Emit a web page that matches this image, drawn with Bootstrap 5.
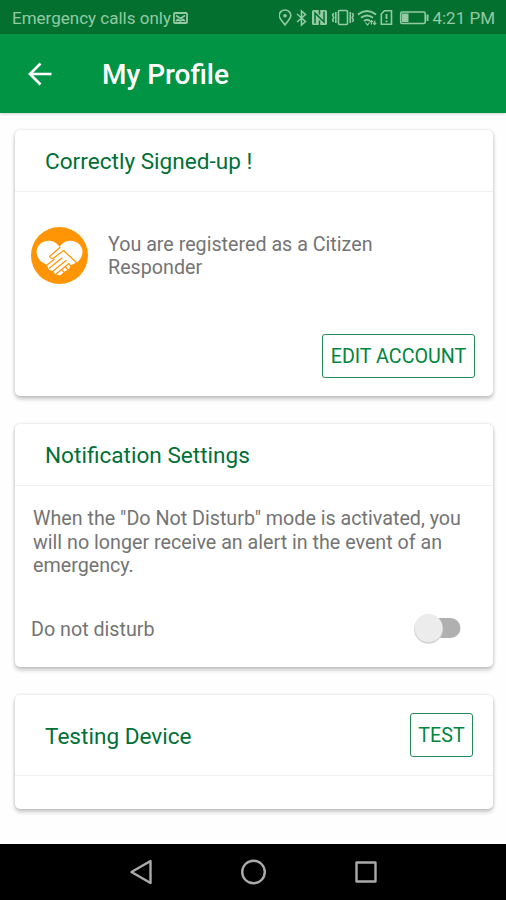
<!DOCTYPE html>
<html lang="en">
<head>
<meta charset="utf-8">
<meta name="viewport" content="width=device-width, initial-scale=1">
<title>My Profile</title>
<link href="https://cdn.jsdelivr.net/npm/bootstrap@5.3.0/dist/css/bootstrap.min.css" rel="stylesheet">
<style>
body{font-family:Roboto,"Liberation Sans",sans-serif;height:900px;background:#fefefe;color:#747474;overflow:hidden}
svg{display:block;flex:none}
.status-strip{height:34px;background:#04702f;color:#93caa4;font-size:17px;line-height:32px;padding:2px 11px 0 12px}
.status-label{width:157px;white-space:nowrap}
.status-time{width:63px;white-space:nowrap}
.app-bar{height:79px;background:#009444;padding:0 28px;box-shadow:0 1px 3px rgba(0,0,0,.2)}
.app-title{font-size:28px;font-weight:500;line-height:34px;color:#fff;margin:2px 0 0 50px}
.content{padding:17px 13px 0 15px}
.panel{border:0;border-radius:5px;background:#fff;box-shadow:0 3px 4px rgba(0,0,0,.22),0 0 3px rgba(0,0,0,.14)}
.panel-lg{height:266px}
.panel-md{height:243px;margin-top:28px}
.panel-sm{height:114px;margin-top:28px}
.panel-head{height:62px;border-bottom:1px solid #f0f0f0;padding:0 20px 0 30px}
.panel-sm .panel-head{height:81px}
.panel-title{font-size:22.6px;font-weight:400;line-height:28px;color:#007037;margin:0;padding-top:3px}
.copy{font-size:19.7px;line-height:23.5px;margin:0}
.status-row{height:128px;padding:0 16px}
.status-row svg{margin-bottom:2px}
.status-row .copy{margin-left:20px}
.notice{padding:21px 10px 0 18px}
.toggle-row{margin-top:33px;padding:0 32px 0 16px}
.toggle-row .copy{padding-top:5px}
.btn-line{--bs-btn-color:#00863d;--bs-btn-border-color:#23895a;--bs-btn-border-radius:3px;--bs-btn-padding-x:0;--bs-btn-padding-y:0;border-width:1.5px;height:44px;font-size:19.7px;line-height:44px;width:153px}
.btn-short{width:63px}
.actions{padding:14px 18px 0 0}
.sys-nav{height:56px;background:#000}
</style>
</head>
<body class="d-flex flex-column">
<div class="status-strip d-flex align-items-center justify-content-between flex-shrink-0">
  <div class="d-flex align-items-center">
    <span class="status-label">Emergency calls only</span>
    <svg class="ms-1" width="15" height="12" viewBox="0 0 15 12" fill="none" stroke="#93caa4" stroke-width="1.8"><rect x="1" y="1" width="13" height="10" rx="1"/><path d="M3 3.5 7.5 6.5 12 3.5M3 9 5 7.5 7 9 10 7.5 12 9"/></svg>
  </div>
  <div class="d-flex align-items-center">
    <svg width="153" height="18" viewBox="279 9 153 18" fill="none" stroke="#93caa4" stroke-width="1.6">
      <path d="M285 25C282 21 279.200 18.500 279.200 15.500A5.800 5.500 0 0 1 290.800 15.500C290.800 18.500 288 21 285 25Z"/><circle cx="285" cy="15.700" r="1.800" fill="#93caa4" stroke="none"/>
      <path d="M297 14 305.500 21.500 301.500 25V11L305.500 14.500 297 22"/>
      <rect x="312" y="10" width="15" height="15" rx="1.500" fill="#93caa4" stroke="none"/><path d="M315 23.500V13L324 22V11.500M319.500 10V14.500M319.500 20.500V25" stroke="#04702f" stroke-width="1.500"/>
      <rect x="338.500" y="10.500" width="9" height="14" rx="1"/><path d="M335.800 12V23M333.500 13 332.700 15.500 333.700 17.500 332.700 20 333.500 22M350.300 12V23M352.500 13 353.300 15.500 352.300 17.500 353.300 20 352.500 22"/>
      <path d="M358 14.500Q367 7.500 376 14.500M361 17.800Q367 13 373 17.800M364 21Q367 18.500 370 21" stroke-width="1.900"/><path d="M365.500 22.500 367.500 25 369.500 22.500M371.500 24.500V20.500M370 22 371.500 20.500 373 22M374.700 20.500V24.500M373.200 23 374.700 24.500 376.200 23" stroke-width="1.200"/>
      <path d="M381.300 14 384.500 10.800H391.500V24.200H381.300Z"/><path d="M386.500 14V19M386.500 20.500V22.300" stroke-width="1.800"/>
      <rect x="400.700" y="12" width="24.500" height="11.500" rx="1.500"/><path d="M402 13.500H408.500V22H402Z" fill="#93caa4" stroke="none"/><path d="M427.500 14.500V21" stroke-width="2"/>
    </svg>
    <span class="status-time text-end">4:21 PM</span>
  </div>
</div>
<header class="app-bar d-flex align-items-center flex-shrink-0">
  <svg width="24" height="24" viewBox="0 0 24 24" fill="none" stroke="#fff" stroke-width="2.700"><path d="M23.500 12H2.500M12.500 1.500 2 12 12.500 22.500"/></svg>
  <h1 class="app-title">My Profile</h1>
</header>
<main class="content flex-grow-1">
  <section class="card panel panel-lg">
    <div class="panel-head d-flex align-items-center"><h2 class="panel-title">Correctly Signed-up !</h2></div>
    <div class="status-row d-flex align-items-center">
      <svg width="57" height="57" viewBox="0 0 57 57"><circle cx="28.500" cy="28.500" r="28.500" fill="#ff9505"/>
      <path d="M28.500 20C24 12.500 14 12 8.500 17.500 3.500 23 5.500 30 10 34.500L16 38 18 43 22 44 24 47 29 48.500 33 45 38 42 40 38 46 35.500C52 30 53.500 23 48.500 17.500 43 12 33 12.500 28.500 20Z" fill="#fff"/>
      <g fill="none" stroke="#ff9505" stroke-width="1.200" stroke-linejoin="round" stroke-linecap="round"><path d="M29 20.500 18.500 29.500Q20.500 33 24 30L32.500 23.500 46 36"/><path d="M16 38 23 32.500M18.500 41 31 31M22 44 35 33.500M25 47 38 36.500"/><path d="M33 45 31 43M37 42.500 34.500 40M41 40 38 37"/></g></svg>
      <p class="copy">You are registered as a Citizen<br>Responder</p>
    </div>
    <div class="actions d-flex justify-content-end"><button type="button" class="btn btn-line">EDIT ACCOUNT</button></div>
  </section>
  <section class="card panel panel-md">
    <div class="panel-head d-flex align-items-center"><h2 class="panel-title">Notification Settings</h2></div>
    <p class="copy notice">When the "Do Not Disturb" mode is activated, you<br>will no longer receive an alert in the event of an<br>emergency.</p>
    <div class="toggle-row d-flex align-items-center justify-content-between">
      <span class="copy">Do not disturb</span>
      <svg width="48" height="34" viewBox="0 0 48 34"><rect x="15" y="7" width="32.500" height="20" rx="10" fill="#b0b0b0"/><circle cx="15.500" cy="18.200" r="14.500" fill="#d4d4d4"/><circle cx="15.500" cy="17" r="14" fill="#ececec"/></svg>
    </div>
  </section>
  <section class="card panel panel-sm">
    <div class="panel-head d-flex align-items-center justify-content-between"><h2 class="panel-title">Testing Device</h2><button type="button" class="btn btn-line btn-short">TEST</button></div>
  </section>
</main>
<nav class="sys-nav d-flex align-items-center justify-content-center flex-shrink-0">
  <svg width="250" height="26" viewBox="0 0 250 26" fill="none" stroke="#aaa" stroke-width="2.400" stroke-linejoin="round"><path d="M22.500 2V24L3.500 13Z"/><circle cx="125.500" cy="13" r="11.300"/><rect x="228.500" y="3.500" width="19" height="19"/></svg>
</nav>
<script src="https://cdn.jsdelivr.net/npm/bootstrap@5.3.0/dist/js/bootstrap.bundle.min.js"></script>
</body>
</html>
